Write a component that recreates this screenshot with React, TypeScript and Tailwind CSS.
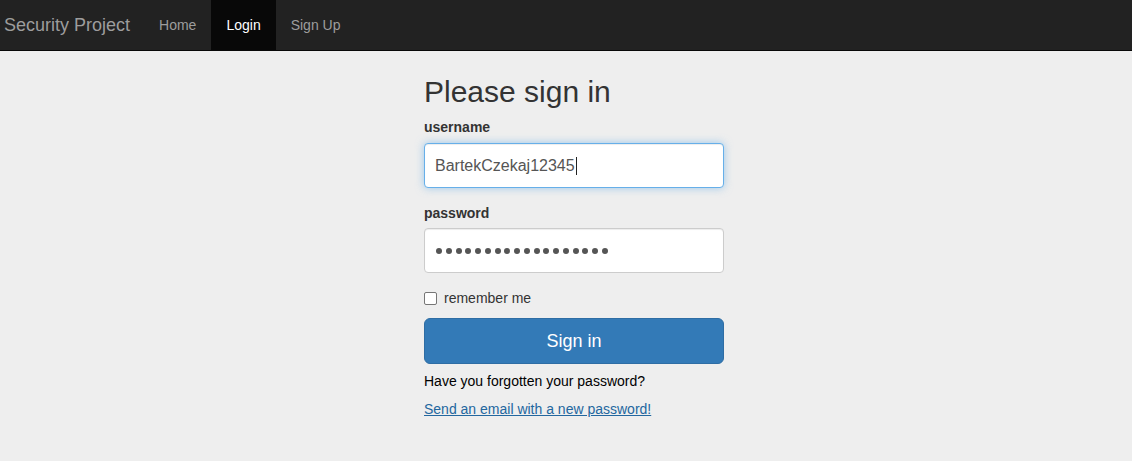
const NAV_LINKS = [
  { label: "Home", active: false },
  { label: "Login", active: true },
  { label: "Sign Up", active: false },
];

const Navbar: React.FC = () => (
  <nav className="flex h-[51px] border-b border-[#080808] bg-[#222]">
    <a className="flex items-center pl-[4px] pr-[14px] text-[18px] leading-[20px] text-[#9d9d9d]">
      Security Project
    </a>
    <ul className="flex">
      {NAV_LINKS.map((link) => (
        <li
          key={link.label}
          className={
            link.active
              ? "flex items-center bg-[#080808] px-[15px] pt-px text-[14px] text-white"
              : "flex items-center px-[15px] pt-px text-[14px] text-[#9d9d9d]"
          }
        >
          {link.label}
        </li>
      ))}
    </ul>
  </nav>
);

const App: React.FC = () => {
  return (
    <div
      className="min-h-[461px] bg-[#eee] text-[#333]"
      style={{ fontFamily: '"Liberation Sans", Arial, sans-serif' }}
    >
      <Navbar />
      <div className="flex justify-center pl-4">
        <form className="flex w-[300px] flex-col">
          <h2 className="mt-[24px] text-[30px] font-normal leading-[33px]">Please sign in</h2>

          <label className="mt-[9px] text-[14px] font-bold leading-[20px]">username</label>
          <div className="mt-[6px] flex h-[45px] items-center rounded-[4px] border border-[#66afe9] bg-white px-[10px] text-[16px] text-[#555] shadow-[inset_0_1px_1px_rgba(0,0,0,0.075),0_0_8px_rgba(102,175,233,0.6)]">
            <span>BartekCzekaj12345</span>
            <span className="ml-px h-[18px] w-px bg-[#222]" />
          </div>

          <label className="mt-[15px] text-[14px] font-bold leading-[20px]">password</label>
          <div className="mt-[5px] flex h-[45px] items-center gap-[3.75px] rounded-[4px] border border-[#ccc] bg-white px-[11px] shadow-[inset_0_1px_1px_rgba(0,0,0,0.075)]">
            {Array.from({ length: 18 }).map((_, index) => (
              <span key={index} className="h-[6px] w-[6px] rounded-full bg-[#555]" />
            ))}
          </div>

          <div className="mt-[19px] flex items-center gap-[7px] text-[14px] leading-[13px]">
            <span className="h-[13px] w-[13px] rounded-[2px] border border-[#767676] bg-white" />
            <span>remember me</span>
          </div>

          <button
            type="button"
            className="mt-[13px] h-[46px] w-full rounded-[6px] border border-[#2e6da4] bg-[#337ab7] text-[18px] text-white"
          >
            Sign in
          </button>

          <p className="mt-[7px] text-[14px] leading-[20px] text-black">
            Have you forgotten your password?
          </p>
          <a className="mt-[8px] self-start text-[14px] leading-[20px] text-[#23679f] underline">
            Send an email with a new password!
          </a>
        </form>
      </div>
    </div>
  );
};

export default App;
